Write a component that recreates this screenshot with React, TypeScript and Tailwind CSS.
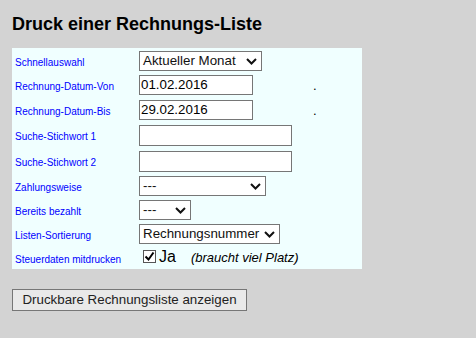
import React from "react";

function Chevron({ className = "" }: { className?: string }) {
  return (
    <svg width="11" height="7" viewBox="0 0 11 7" className={className}>
      <polyline points="1,1 5.5,5.5 10,1" fill="none" stroke="#111" strokeWidth="2" />
    </svg>
  );
}

function FakeSelect({ value, width }: { value: string; width: string }) {
  return (
    <div
      className={`${width} h-[20px] bg-white border border-[#767676] flex items-center justify-between pl-[3px] pr-[4px] text-[13.33px] leading-[16px] text-[#111]`}
    >
      <span className="whitespace-nowrap">{value}</span>
      <Chevron />
    </div>
  );
}

function FakeInput({ value = "", width, height = "h-[20px]" }: { value?: string; width: string; height?: string }) {
  return (
    <div
      className={`${width} ${height} bg-white border border-[#767676] flex items-center pl-[1px] text-[13.33px] leading-[16px] text-black`}
    >
      {value}
    </div>
  );
}

function Row({
  label,
  h,
  children,
  dot = false,
}: {
  label: string;
  h: string;
  children: React.ReactNode;
  dot?: boolean;
}) {
  return (
    <div className={`flex ${h} pt-[3px] items-start`}>
      <div className="w-[124px] mt-[6px] text-[10px] leading-[12px] text-[#0000ff] whitespace-nowrap">
        {label}
      </div>
      <div className="w-[174px]">{children}</div>
      {dot && <span className="mt-[3px] text-[13px] leading-[15px] text-black">.</span>}
    </div>
  );
}

export default function App() {
  return (
    <div className="min-h-screen bg-[#d3d3d3] px-[12px] font-['Liberation_Sans',Arial,sans-serif]">
      <h1 className="pt-[14px] mb-[13px] text-[18px] leading-[21px] font-bold text-black">
        Druck einer Rechnungs-Liste
      </h1>

      <div className="w-[350px] bg-[#f0ffff] pl-[3px]">
        <Row label="Schnellauswahl" h="h-[24px]">
          <FakeSelect value="Aktueller Monat" width="w-[123px]" />
        </Row>
        <Row label="Rechnung-Datum-Von" h="h-[25px]" dot>
          <FakeInput value="01.02.2016" width="w-[114px]" />
        </Row>
        <Row label="Rechnung-Datum-Bis" h="h-[25px]" dot>
          <FakeInput value="29.02.2016" width="w-[114px]" />
        </Row>
        <Row label="Suche-Stichwort 1" h="h-[26px]">
          <FakeInput width="w-[153px]" height="h-[21px]" />
        </Row>
        <Row label="Suche-Stichwort 2" h="h-[25px]">
          <FakeInput width="w-[153px]" height="h-[21px]" />
        </Row>
        <Row label="Zahlungsweise" h="h-[24px]">
          <FakeSelect value="---" width="w-[127px]" />
        </Row>
        <Row label="Bereits bezahlt" h="h-[24px]">
          <FakeSelect value="---" width="w-[52px]" />
        </Row>
        <Row label="Listen-Sortierung" h="h-[26px]">
          <FakeSelect value="Rechnungsnummer" width="w-[141px]" />
        </Row>

        {/* Steuerdaten */}
        <div className="flex h-[22px] pt-[1px] items-start">
          <div className="w-[124px] mt-[6px] text-[10px] leading-[12px] text-[#0000ff] whitespace-nowrap">
            Steuerdaten mitdrucken
          </div>
          <div className="flex items-baseline leading-[18px]">
            <span className="ml-[4px] mb-[-1px] w-[13px] h-[13px] border border-[#555] bg-white flex items-center justify-center">
              <svg width="11" height="11" viewBox="0 0 11 11">
                <polyline points="1.5,5.5 4.5,8.5 9.5,1.5" fill="none" stroke="#000" strokeWidth="2" />
              </svg>
            </span>
            <span className="ml-[3px] text-[16px] text-black">Ja</span>
            <span className="ml-[15px] text-[13px] italic text-black">(braucht viel Platz)</span>
          </div>
        </div>
      </div>

      <button className="mt-[20px] w-[235px] h-[22px] bg-[#e9e9e9] border border-[#767676] text-[13.33px] leading-[16px] text-[#222] flex items-center justify-center">
        Druckbare Rechnungsliste anzeigen
      </button>
    </div>
  );
}
